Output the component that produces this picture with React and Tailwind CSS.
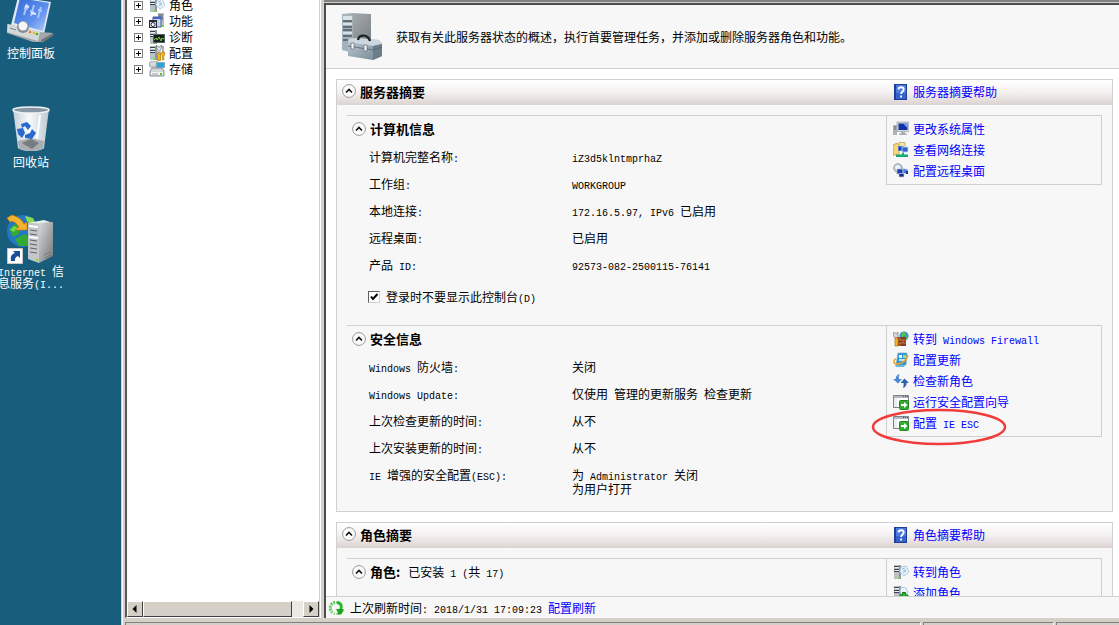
import { Fragment } from "react";
import clsx from "clsx";

const tree = [
  { name: "角色", icon: RolesIcon },
  { name: "功能", icon: FeaturesIcon },
  { name: "诊断", icon: DiagnosticsIcon },
  { name: "配置", icon: ConfigIcon },
  { name: "存储", icon: StorageIcon },
];

const computerInfo = [
  { label: "计算机完整名称:", values: ["iZ3d5klntmprhaZ"] },
  { label: "工作组:", values: ["WORKGROUP"] },
  { label: "本地连接:", values: ["172.16.5.97, IPv6 已启用"] },
  { label: "远程桌面:", values: ["已启用"] },
  { label: "产品 ID:", values: ["92573-082-2500115-76141"] },
];

const securityInfo = [
  { label: "Windows 防火墙:", values: ["关闭"] },
  { label: "Windows Update:", values: ["仅使用 管理的更新服务 检查更新"] },
  { label: "上次检查更新的时间:", values: ["从不"] },
  { label: "上次安装更新的时间:", values: ["从不"] },
  { label: "IE 增强的安全配置(ESC):", values: ["为 Administrator 关闭", "为用户打开"] },
];

const computerLinks = [
  { text: "更改系统属性", icon: ComputerIcon },
  { text: "查看网络连接", icon: NetworkIcon },
  { text: "配置远程桌面", icon: RemoteIcon },
];

const securityLinks = [
  { text: "转到 Windows Firewall", icon: FirewallIcon },
  { text: "配置更新", icon: UpdateIcon },
  { text: "检查新角色", icon: RefreshIcon },
  { text: "运行安全配置向导", icon: WizardIcon },
  { text: "配置 IE ESC", icon: WizardIcon, circled: true },
];

const roleLinks = [
  { text: "转到角色", icon: RolesIcon },
  { text: "添加角色", icon: AddRoleIcon },
];

// half-width characters take exactly half of a full-width one
function Mixed({ children }) {
  return children.split(/([\x20-\x7e]+)/).map((part, i) =>
    i % 2 ? (
      <span key={i} className="font-['Liberation_Mono',monospace] text-[10px] leading-[0] font-normal whitespace-pre">
        {part}
      </span>
    ) : (
      <Fragment key={i}>{part}</Fragment>
    )
  );
}

/* ---------- small icons ---------- */

function Icon({ children, className = "size-4" }) {
  return (
    <svg viewBox="0 0 16 16" className={clsx("shrink-0", className)} aria-hidden="true">
      {children}
    </svg>
  );
}

function Tower() {
  return (
    <>
      <path d="M1 1h7v14H1z" fill="#8e979f" />
      <path d="M1 1h5v14H1z" fill="#b9c0c6" />
      <path d="M1 2h5v1H1zM1 5h5v1H1zM1 7h5v1H1z" fill="#39424a" />
      <path d="M2 3h4v1H2zM2 6h4v1H2z" fill="#edf1f3" />
      <path d="M5 13h2v2H5z" fill="#63e02c" />
    </>
  );
}

function RolesIcon() {
  return (
    <Icon>
      <Tower />
      <path d="M8 3l5-1 3 6-5 4-4-4z" fill="#e9f4fc" stroke="#9ebdd6" strokeWidth=".8" />
      <path d="M9 5l3-1M10 7l3-1M10 9l3-2" stroke="#7cabd3" strokeWidth=".8" />
    </Icon>
  );
}

function AddRoleIcon() {
  return (
    <Icon>
      <Tower />
      <path d="M8 2l5 1 2 5-5 3-3-4z" fill="#e9f4fc" stroke="#9ebdd6" strokeWidth=".8" />
      <path d="M9.500 7.500h3v2.500H15v3h-2.500v2.500h-3V13H7v-3h2.500z" fill="#27c322" stroke="#087a10" />
    </Icon>
  );
}

function FeaturesIcon() {
  return (
    <Icon>
      <path d="M9 0h6v14H9z" fill="#b9c0c6" />
      <path d="M9 2h5M9 4h5M9 6h5" stroke="#4c555c" />
      <path d="M4 4h8v10H4z" fill="#c8d5f7" stroke="#4b5b9c" />
      <path d="M4 4h8v2H4z" fill="#4065cf" />
      <path d="M0 7h8v8H0z" fill="#252a31" />
      <path d="M1 9h6v5H1z" fill="#dfe3e6" />
      <circle cx="4" cy="11.500" r="2" fill="#fff" stroke="#252a31" />
      <path d="M13 12h2v2h-2z" fill="#63e02c" />
    </Icon>
  );
}

function DiagnosticsIcon() {
  return (
    <Icon>
      <Tower />
      <path d="M4 5h12v9H4z" fill="#596069" />
      <path d="M5 6h10v7H5z" fill="#142018" />
      <path d="M5 11l2-2 1 2 2-3 2 4 1-3 2 1" stroke="#79d43c" fill="none" />
    </Icon>
  );
}

function ConfigIcon() {
  return (
    <Icon>
      <Tower />
      <path d="M7.500 0v3l1.500 2v4h2V5l1.500-2V0L11 2H9z" fill="#e6eaed" stroke="#737b82" strokeWidth=".8" />
      <path d="M8.500 8h3v7.500h-3z" fill="#f0b51d" stroke="#b37805" strokeWidth=".7" />
      <path d="M14 1v7" stroke="#8a9299" strokeWidth="1.500" />
      <path d="M12.800 7h2.700v3l-.7 1v4h-1.500v-4l-.5-1z" fill="#f7b819" stroke="#b37805" strokeWidth=".7" />
    </Icon>
  );
}

function StorageIcon() {
  return (
    <Icon>
      <path d="M0 2l3-2h5l-1 6H1z" fill="#d6dade" stroke="#7d868e" strokeWidth=".7" />
      <path d="M7 1h9v6H7z" fill="#8ea9b9" />
      <path d="M8 2h7v4H8z" fill="#24a6df" />
      <path d="M1 10l2-3h10l2 3v5H1z" fill="#d2d6da" stroke="#737b83" strokeWidth=".8" />
      <path d="M2 11h12v3H2z" fill="#f0f2f4" />
      <path d="M11 12h2v2h-2z" fill="#55c427" />
      <path d="M3 13h6" stroke="#9da5ad" />
    </Icon>
  );
}

function HelpIcon() {
  return (
    <Icon>
      <path d="M1 0h13v16H1z" fill="#1f3f97" />
      <path d="M3 1h10v14H3z" fill="#4d7be0" />
      <path d="M3 9h10v6H3z" fill="#3562cc" />
      <path d="M5.500 5.500c0-3 5.200-3 5.200 0 0 2-2.600 2-2.600 4.500M8.100 11.500v2" fill="none" stroke="#fff" strokeWidth="1.800" />
    </Icon>
  );
}

function ComputerIcon() {
  return (
    <Icon>
      <path d="M0 4h4v10H0z" fill="#aeb4ba" />
      <path d="M1 6h2M1 8h2" stroke="#60686f" />
      <path d="M4 1h12v9.500H4z" fill="#d3d7dc" stroke="#8f969e" strokeWidth=".6" />
      <path d="M5.500 2.500h9v6.500h-9z" fill="#1030a8" />
      <path d="M10 2.500h4.500V7z" fill="#7aa5f4" />
      <path d="M8 10.500h4v2h2V14H6v-1.500h2z" fill="#a9afb5" />
    </Icon>
  );
}

function NetworkIcon() {
  return (
    <Icon>
      <path d="M0 3l4-2 2 2v10H0z" fill="#f4d676" stroke="#c79c34" strokeWidth=".8" />
      <path d="M6 .5h6v5H6z" fill="#f7e5a6" stroke="#b99b4f" strokeWidth=".7" />
      <path d="M5 4h6v5H5z" fill="#1640b8" stroke="#c8d4e4" strokeWidth=".7" />
      <path d="M9 5h6v5H9z" fill="#2d60d9" stroke="#d9e0e8" strokeWidth=".8" />
      <path d="M9 10.500h2v2h4v2.500H3v-2.500h6z" fill="#17a878" />
    </Icon>
  );
}

function RemoteIcon() {
  return (
    <Icon>
      <circle cx="5" cy="5" r="4.200" fill="#cbdde8" stroke="#8199a8" />
      <path d="M2 4l3-2 2 3-3 2z" fill="#f0f7fa" />
      <path d="M4 6h6v5H4z" fill="#1a3db0" stroke="#b9c4d1" strokeWidth=".7" />
      <path d="M10 5.500l5 1-1 4h-4z" fill="#4a7de2" stroke="#c8d0da" strokeWidth=".7" />
      <path d="M6 10.500h5V14H6z" fill="#112d8b" stroke="#c8d0da" strokeWidth=".7" />
      <path d="M13 8h2v3h-2z" fill="#17318f" />
    </Icon>
  );
}

function FirewallIcon() {
  return (
    <Icon>
      <circle cx="11" cy="5" r="4.600" fill="#3b91dd" />
      <path d="M9 1l4 1-1 3-3 1zM13 5l2 1-2 3z" fill="#55c73b" />
      <path d="M4 6h9v9H4z" fill="#8a3a20" />
      <path d="M4 9h9M4 12h9M7 6v3M10 9v3M7 12v3" stroke="#d08a66" strokeWidth=".7" />
      <path d="M1 1l2 2 2-2v4L4 7H2L0 4z" fill="#d5dade" stroke="#747c84" strokeWidth=".7" />
      <path d="M2 7h3v8H2z" fill="#f2b824" stroke="#a67208" strokeWidth=".7" />
    </Icon>
  );
}

function UpdateIcon() {
  return (
    <Icon>
      <path d="M5 1h9l-1 12H3z" fill="#2e97d1" stroke="#71a8c6" strokeWidth=".7" />
      <path d="M6 3h3v3H6z" fill="#e8f7ff" />
      <path d="M10 3h3v3h-3z" fill="#a5dd66" />
      <path d="M6 7h6v2H6z" fill="#bce5f7" />
      <path d="M3 7C0 8 0 12 4 12c5 0 10-4 11-9" fill="none" stroke="#f1a42d" strokeWidth="1.500" />
      <path d="M2 13h10l-1 2H3z" fill="#68b8d7" />
    </Icon>
  );
}

function RefreshIcon() {
  return (
    <Icon>
      <path d="M6.500 1C4 2 2.500 3.500 2.800 6H0l5 4.500L9 6H6c-.5-2 0-3.500.5-5z" fill="#4a8ad4" />
      <path d="M10 15c2.500-1 3.800-2.500 3.500-5H16l-4.500-4.500L7.500 10h3c.3 2 0 3.500-.5 5z" fill="#2c64ad" />
    </Icon>
  );
}

function WizardIcon() {
  return (
    <Icon>
      <path d="M.5 1.500h15v12H.5z" fill="#fff" stroke="#7d828d" />
      <path d="M1 2h14v2H1z" fill="#b4b9c3" />
      <path d="M10 2h1v1h-1zM12 2h1v1h-1zM14 2h1v1h-1z" fill="#4a505c" />
      <path d="M1 4h3v9H1z" fill="#e8edf2" />
      <rect x="6.500" y="6.500" width="9" height="9" rx="1" fill="#34ae32" stroke="#21851f" />
      <path d="M8 10h3V8l3.500 3-3.500 3v-2H8z" fill="#fff" />
    </Icon>
  );
}

function ReloadIcon() {
  return (
    <Icon>
      <path d="M7 2.500A5.500 5.500 0 0 0 4 12" fill="none" stroke="#55c94f" strokeWidth="3" strokeDasharray="1.800 1" />
      <path d="M3.500 12A6 6 0 0 0 8 14" fill="none" stroke="#8ddb88" strokeWidth="2" strokeDasharray="1.500 1" />
      <path d="M8.500 2.500c4.500 0 6 4 4 7.500" fill="none" stroke="#2cb52b" strokeWidth="3" />
      <path d="M8 9h7.500v2L13 14.500H8l2-2z" fill="#19a51b" />
    </Icon>
  );
}

function CollapseButton({ label }) {
  return (
    <button type="button" aria-label={label} className="size-3.5 shrink-0">
      <svg viewBox="0 0 14 14" className="size-3.5">
        <circle cx="7" cy="7" r="6.400" fill="#fcfcfc" stroke="#99959b" />
        <path d="M4 8.500l3-3 3 3" fill="none" stroke="#111" strokeWidth="1.600" />
      </svg>
    </button>
  );
}

/* ---------- large icons ---------- */

function ControlPanelIcon() {
  return (
    <svg viewBox="0 0 48 48" className="size-12" aria-hidden="true">
      <defs>
        <linearGradient id="panel" x1="0" y1="0" x2="1" y2="1">
          <stop offset="0" stopColor="#3569d6" />
          <stop offset=".6" stopColor="#5e90ee" />
          <stop offset="1" stopColor="#b8d1fb" />
        </linearGradient>
      </defs>
      <path d="M11 1l33 5-7 32-33-9z" fill="#dfe7f2" />
      <path d="M13 2l29 5-6 28-29-8z" fill="url(#panel)" />
      <path d="M20 8l-3 11M27 9l-3 11M34 11l-3 11M17 12l4 1M23 15l4 1M31 14l4 1" stroke="#a9c5fb" strokeWidth="2" />
      <path d="M18 10l4 1M24 17l5 1" stroke="#e6effe" strokeWidth="2" />
      <path d="M0 28l33 8 13 1-12 9h-8L0 37z" fill="#a5a8aa" />
      <path d="M1 28l32 8-2 9L0 36z" fill="#d5d8d9" />
      <path d="M34 44l12-7 1 2-12 8z" fill="#737779" />
      <circle cx="16" cy="31" r="6" fill="#888d91" />
      <circle cx="16" cy="30" r="4.500" fill="#f5f6f7" />
      <path d="M3 32l6 2" stroke="#7c8286" />
      <circle cx="23" cy="36" r="1.300" fill="#f07a21" />
      <circle cx="27" cy="37" r="1.300" fill="#e9b91d" />
      <circle cx="30" cy="38" r="1.300" fill="#46b52d" />
    </svg>
  );
}

function RecycleBinIcon() {
  return (
    <svg viewBox="0 0 48 48" className="size-12" aria-hidden="true">
      <defs>
        <linearGradient id="bin" x1="0" y1="0" x2="1" y2="0">
          <stop offset="0" stopColor="#c4ced8" />
          <stop offset=".45" stopColor="#f9fbfc" />
          <stop offset="1" stopColor="#bcc7d1" />
        </linearGradient>
      </defs>
      <path d="M6 4h36l-5 39c-3 4-22 4-26 0z" fill="url(#bin)" />
      <path d="M11 36l13-3 13 3-1 7c-3 4-21 4-24 0z" fill="#a9aeb2" />
      <path d="M15 38l9-4 8 4-7 6z" fill="#777c80" />
      <ellipse cx="24" cy="5" rx="18" ry="3" fill="#8796a3" stroke="#edf1f4" strokeWidth="1.500" />
      <path d="M33 10l-3 24" stroke="#fff" strokeWidth="2" />
      <g fill="#2769cf">
        <path d="M14 19l6-2 4 4-3 4-3-4-3 2z" />
        <path d="M10 24l6-1 2 5-3 5-4-4z" />
        <path d="M18 30l5-2 2-4 4 4-4 6-7-1z" />
      </g>
    </svg>
  );
}

function IisIcon() {
  return (
    <svg viewBox="0 0 48 50" className="h-[50px] w-12" aria-hidden="true">
      <defs>
        <linearGradient id="iis" x1="0" y1="0" x2="1" y2="1">
          <stop offset="0" stopColor="#d7d9da" />
          <stop offset="1" stopColor="#737779" />
        </linearGradient>
      </defs>
      <circle cx="16" cy="17" r="16" fill="#2476c7" />
      <path d="M2 15l6-5 6 3-2 7-6 3zM8 25l9-5 6 3-3 9h-8z" fill="#33a936" />
      <path d="M18 2l8 2 3 7-5 1-4-5z" fill="#8cda4f" />
      <path d="M3 16l4-4 4 2-4 4z" fill="#6fd94a" />
      <path d="M0 4l5-3c4 1 10 4 12 9l3-2v8H8l4-3C9 9 6 6 3 8z" fill="#f6b22c" stroke="#c27b0c" strokeWidth=".7" />
      <path d="M21 9l16-3 9 3-14 1z" fill="#eceded" />
      <path d="M32 9l14-1v34l-14 7z" fill="url(#iis)" />
      <path d="M21 9l11 1v39l-11-4z" fill="#c4c7c9" />
      <path d="M23 16l7 1M23 20l7 1M23 26l7 1M23 30l7 1M23 34l7 1M23 38l7 1" stroke="#5e6366" />
      <path d="M22 12l9 1M22 23l9 1" stroke="#fff" strokeWidth="2" />
      <path d="M37 41l6-3M38 44l6-3" stroke="#5d6062" strokeDasharray="1 1" />
      <circle cx="30" cy="46" r="1.300" fill="#78e324" />
      <path d="M.5 34.500h15v15H.5z" fill="#fff" stroke="#c8c8c8" />
      <path d="M4 47c-1-5 1-7 4-8l-2-2h7v7l-2-2c-3 1-3 3-3 5z" fill="#174f9e" />
    </svg>
  );
}

function ServerManagerIcon() {
  return (
    <svg viewBox="0 0 44 50" className="h-[50px] w-11" aria-hidden="true">
      <defs>
        <linearGradient id="side" x1="0" y1="0" x2="1" y2="1">
          <stop offset="0" stopColor="#b3b6b8" />
          <stop offset="1" stopColor="#757b80" />
        </linearGradient>
        <linearGradient id="box" x1="0" y1="0" x2="1" y2="1">
          <stop offset="0" stopColor="#c0ced8" />
          <stop offset="1" stopColor="#71838f" />
        </linearGradient>
      </defs>
      <path d="M2 2l10-1 19 1v35H12z" fill="url(#side)" />
      <path d="M2 2l11 1v38L2 38z" fill="#a4b2bc" />
      <path d="M3 4h9v4H3zM3 11h9v2H3zM3 20h9v2H3z" fill="#d9e2e8" />
      <path d="M3 9h9M3 15h9M3 18h9M3 24h9M3 28h5" stroke="#4d5960" strokeWidth="1.500" />
      <path d="M9 27l6-1 24 2 3 4v12l-9 4-25-4V30z" fill="url(#box)" />
      <path d="M9 27l6-1 24 2 3 4-9 2-25-4z" fill="#cbd7df" />
      <path d="M33 34l9-2v12l-9 4z" fill="#6c7d8a" />
      <path d="M8 34l25 4 9-3" stroke="#54646f" strokeWidth=".8" fill="none" />
      <path d="M18 28c1-6 10-6 12 1" stroke="#202427" strokeWidth="2.300" fill="none" />
      <path d="M11 31h3v6h-3zM24 33h3v6h-3z" fill="#f4f7f8" stroke="#5f6b74" strokeWidth=".7" />
    </svg>
  );
}

/* ---------- building blocks ---------- */

function DesktopItem({ icon: Glyph, lines }) {
  return (
    <a href="#" className="flex h-[109px] w-[62px] flex-col items-center text-center leading-3 text-white">
      <span className="flex h-12 items-start">
        <Glyph />
      </span>
      <span className="mt-[3px] whitespace-nowrap">
        {lines.map((line) => (
          <span key={line} className="block">
            <Mixed>{line}</Mixed>
          </span>
        ))}
      </span>
    </a>
  );
}

function TaskLinks({ links }) {
  return (
    <ul className="w-[216px] shrink-0 self-start border border-[#d0d0d0] pt-0.5 pb-[3px] pl-1.5">
      {links.map(({ text, icon: Glyph, circled }) => (
        <li key={text} className="relative flex h-[21px] items-center gap-1">
          <Glyph />
          <a href="#" className="whitespace-nowrap text-[#0000ff]">
            <Mixed>{text}</Mixed>
          </a>
          {circled && (
            <svg viewBox="0 0 136 38" className="pointer-events-none absolute -top-1 -left-[22px] h-[38px] w-[136px]" aria-hidden="true">
              <ellipse cx="68" cy="19" rx="66" ry="17" fill="none" stroke="#f23c3c" strokeWidth="2.500" />
            </svg>
          )}
        </li>
      ))}
    </ul>
  );
}

function Group({ title, note, rows = [], links, children }) {
  return (
    <div className="flex">
      <div className="flex-1 border-t border-[#d0d0d0]">
        <div className="flex h-[27px] items-center gap-1 pb-0.5 pl-[5px]">
          <CollapseButton label={title} />
          <h3 className="text-[13px] font-bold">{title}</h3>
          {note && (
            <span className="ml-1 whitespace-nowrap">
              <Mixed>{note}</Mixed>
            </span>
          )}
        </div>
        <dl>
          {rows.map(({ label, values }) => (
            <div key={label} className="flex pt-[7px] pb-1.5 pl-[22px] leading-[14px]">
              <dt className="w-[203px] shrink-0">
                <Mixed>{label}</Mixed>
              </dt>
              <dd>
                {values.map((value) => (
                  <div key={value}>
                    <Mixed>{value}</Mixed>
                  </div>
                ))}
              </dd>
            </div>
          ))}
        </dl>
        {children}
      </div>
      <TaskLinks links={links} />
    </div>
  );
}

function Section({ title, help, children }) {
  return (
    <section className="border border-[#d0d0d0] bg-[#f7f7f7]">
      <header className="flex h-[25px] items-center bg-linear-to-b from-white via-[#f4f0f0] to-[#dbd3d1] pb-0.5">
        <div className="flex flex-1 items-center gap-1 pl-[5px]">
          <CollapseButton label={title} />
          <h2 className="text-[13px] font-bold">{title}</h2>
        </div>
        <div className="flex w-[226px] items-center gap-1 pl-[7px]">
          <HelpIcon />
          <a href="#" className="text-[#0000ff]">{help}</a>
        </div>
      </header>
      <div className="flex flex-col gap-[15px] px-2.5 pt-2.5 pb-[9px]">{children}</div>
    </section>
  );
}

function ScrollButton({ label, path }) {
  return (
    <button
      type="button"
      aria-label={label}
      className="size-4 shrink-0 border border-t-white border-r-[#404040] border-b-[#404040] border-l-white bg-[#d4d0c8]"
    >
      <svg viewBox="0 0 14 14" className="size-3.5">
        <path d={path} />
      </svg>
    </button>
  );
}

function TreePane() {
  return (
    <nav className="flex w-[195px] shrink-0 flex-col overflow-hidden border-r border-b border-l-2 border-r-[#d4d0c8] border-b-white border-l-[#5a5a5a] bg-white">
      <ul className="-mt-[3px] flex-1 pl-[7px]">
        {tree.map(({ name, icon: Glyph }) => (
          <li key={name} className="flex h-4 items-center">
            <button type="button" aria-label={name} className="size-[9px] border border-[#808080]">
              <svg viewBox="0 0 7 7" className="size-[7px]">
                <path d="M1 3h5v1H1zM3 1h1v5H3z" />
              </svg>
            </button>
            <span className="ml-1.5 flex">
              <Glyph />
            </span>
            <span className="ml-1">{name}</span>
          </li>
        ))}
      </ul>
      <div className="flex h-4 bg-[#ebe9e4]">
        <ScrollButton label="向左滚动" path="M8.500 3v8l-4-4z" />
        <div className="w-[149px] border border-t-white border-r-[#404040] border-b-[#404040] border-l-white bg-[#d4d0c8]" />
        <div className="flex-1" />
        <ScrollButton label="向右滚动" path="M5.500 3v8l4-4z" />
      </div>
    </nav>
  );
}

function App() {
  return (
    <div className="flex h-screen overflow-hidden bg-[#195d7c] font-['Noto_Sans_CJK_SC',sans-serif] text-xs text-black">
      {/* desktop */}
      <div className="-mt-1 flex w-[121px] shrink-0 flex-col">
        <DesktopItem icon={ControlPanelIcon} lines={["控制面板"]} />
        <DesktopItem icon={RecycleBinIcon} lines={["回收站"]} />
        <DesktopItem icon={IisIcon} lines={["Internet 信", "息服务(I..."]} />
      </div>

      {/* server manager window */}
      <div className="flex min-w-0 flex-1 flex-col border-l border-[#d4d0c8] bg-[#d4d0c8]">
        <div className="flex min-h-0 flex-1 border-l border-white pl-0.5">
          <TreePane />

          <div className="flex min-w-0 flex-1 flex-col border-l border-white pl-[3px]">
            <div className="h-[3px] shrink-0 border-t-2 border-[#808080]" />
            <main className="flex min-h-0 flex-1 flex-col border-t-2 border-l-2 border-[#4c4c4c] bg-white">
              <div className="flex h-16 shrink-0 items-center gap-3 border-b border-[#d0d0d0] bg-[#f7f7f7] pl-3.5">
                <ServerManagerIcon />
                <p className="whitespace-nowrap">
                  获取有关此服务器状态的概述，执行首要管理任务，并添加或删除服务器角色和功能。
                </p>
              </div>

              <div className="flex min-h-0 flex-1 flex-col gap-2.5 overflow-hidden pt-2.5 pr-1.5 pl-2.5 *:shrink-0">
                <Section title="服务器摘要" help="服务器摘要帮助">
                  <Group title="计算机信息" rows={computerInfo} links={computerLinks}>
                    <label className="mt-[5px] flex h-[27px] w-fit items-center gap-1.5 pl-[21px]">
                      <span className="relative size-3">
                        <input
                          type="checkbox"
                          defaultChecked
                          className="peer block size-3 appearance-none border border-t-[#606060] border-r-[#d4d0c8] border-b-[#d4d0c8] border-l-[#606060] bg-white"
                        />
                        <svg viewBox="0 0 12 12" className="pointer-events-none absolute inset-0 hidden size-3 peer-checked:block">
                          <path d="M3 5.500l2 2.500 4.500-5" fill="none" stroke="#000" strokeWidth="2" />
                        </svg>
                      </span>
                      <span>
                        <Mixed>登录时不要显示此控制台(D)</Mixed>
                      </span>
                    </label>
                  </Group>
                  <Group title="安全信息" rows={securityInfo} links={securityLinks} />
                </Section>

                <Section title="角色摘要" help="角色摘要帮助">
                  <Group title="角色:" note="已安装 1 (共 17)" links={roleLinks} />
                </Section>
              </div>

              <footer className="flex h-[22px] shrink-0 items-center border-t border-[#d0d0d0] bg-[#f7f7f7] pl-0.5 whitespace-nowrap">
                <ReloadIcon />
                <span className="mx-1.5">
                  <Mixed>上次刷新时间: 2018/1/31 17:09:23</Mixed>
                </span>
                <a href="#" className="text-[#0000ff]">配置刷新</a>
              </footer>
            </main>
          </div>
        </div>

        {/* status bar */}
        <div className="flex h-[7px] shrink-0 gap-0.5 border-l border-white pt-1 pl-0.5">
          <div className="flex-1 border-t border-r border-l border-t-[#808080] border-r-white border-l-[#808080]" />
          <div className="w-[131px] border-t border-r border-l border-t-[#808080] border-r-white border-l-[#808080]" />
          <div className="w-[63px] border-t border-l border-[#808080]" />
        </div>
      </div>
    </div>
  );
}

export default App;
